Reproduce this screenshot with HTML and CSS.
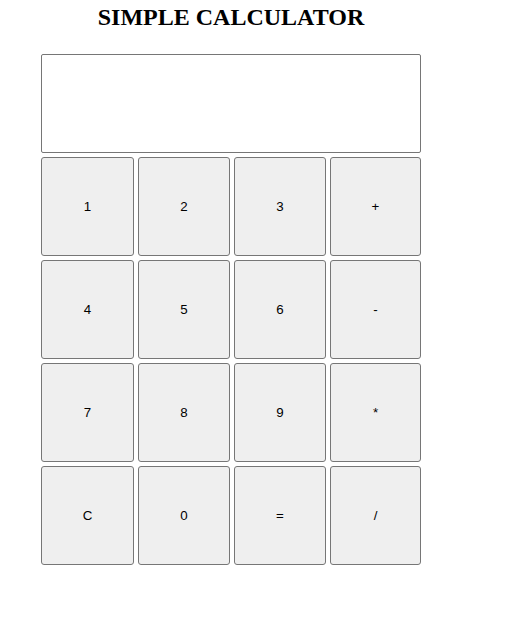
FILE: index.html
```html
<!DOCTYPE html>
<html>
<head>
<meta charset="utf-8">
<title>Simple Calculator</title>
<link rel="stylesheet" href="styles.css">
</head>
<body>
<div class="calc">
  <h2 class="title">SIMPLE CALCULATOR</h2>
  <input class="display" type="text" readonly>
  <div class="keys">
    <button class="key">1</button>
    <button class="key">2</button>
    <button class="key">3</button>
    <button class="key">+</button>
    <button class="key">4</button>
    <button class="key">5</button>
    <button class="key">6</button>
    <button class="key">-</button>
    <button class="key">7</button>
    <button class="key">8</button>
    <button class="key">9</button>
    <button class="key">*</button>
    <button class="key">C</button>
    <button class="key">0</button>
    <button class="key">=</button>
    <button class="key">/</button>
  </div>
</div>
</body>
</html>
```

FILE: styles.css
```css
html, body {
  margin: 0;
  padding: 0;
  background: #ffffff;
}

.calc {
  width: 380px;
  margin-left: 41px;
  padding-top: 4px;
  display: flex;
  flex-direction: column;
}

.title {
  font-family: "Liberation Serif", "Times New Roman", serif;
  font-weight: bold;
  font-size: 24px;
  line-height: 27px;
  margin: 0 0 23px 0;
  text-align: center;
  color: #000;
}

.display {
  box-sizing: border-box;
  width: 380px;
  height: 99px;
  margin: 0;
  padding: 0 4px;
  border: 1px solid #767676;
  border-radius: 2px;
  background: #fff;
  font-family: "Liberation Sans", Arial, sans-serif;
  font-size: 13.33px;
  outline: none;
}

.keys {
  margin-top: 4px;
  display: grid;
  grid-template-columns: 93px 92px 92px 91px;
  grid-auto-rows: 99px;
  gap: 4px;
}

.key {
  box-sizing: border-box;
  margin: 0;
  padding: 0;
  border: 1px solid #767676;
  border-radius: 3px;
  background: #efefef;
  color: #000;
  font-family: "Liberation Sans", Arial, sans-serif;
  font-size: 13.33px;
}
```
